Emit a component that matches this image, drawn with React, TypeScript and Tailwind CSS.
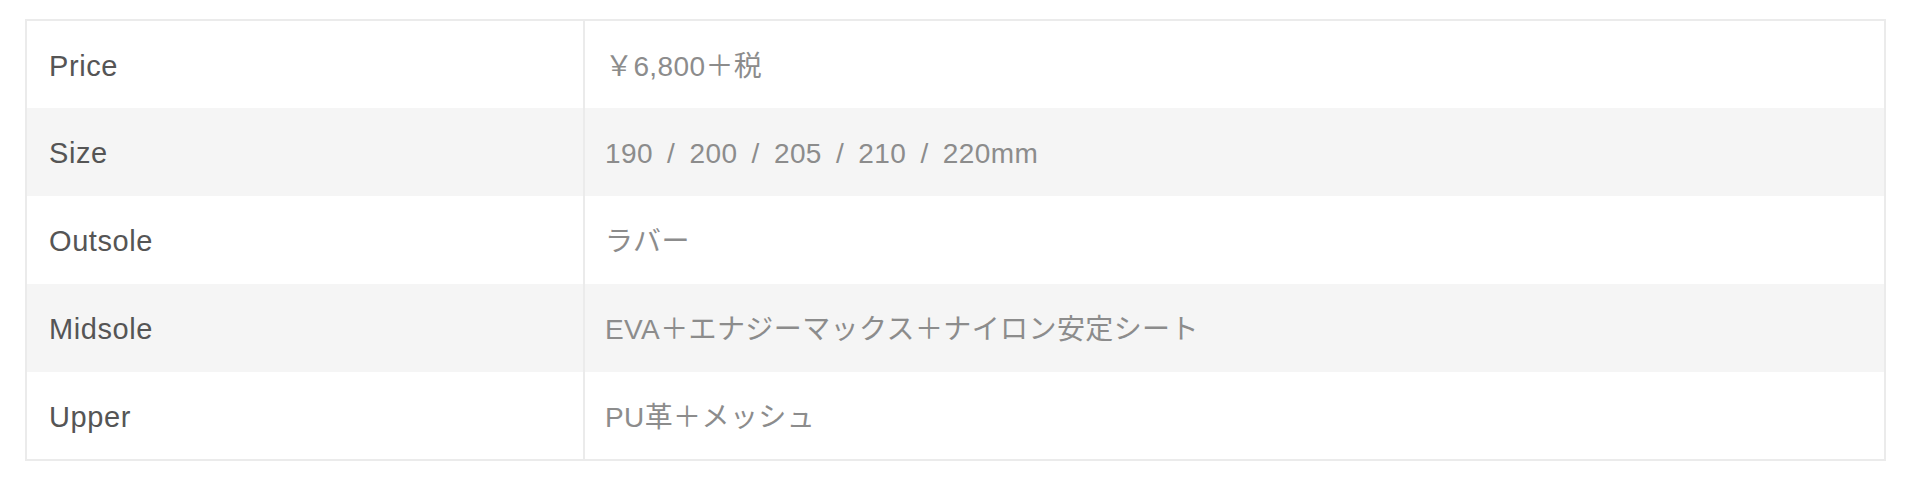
const specs = [
  { label: "Price", value: "￥6,800＋税" },
  { label: "Size", value: "190 / 200 / 205 / 210 / 220mm" },
  { label: "Outsole", value: "ラバー" },
  { label: "Midsole", value: "EVA＋エナジーマックス＋ナイロン安定シート" },
  { label: "Upper", value: "PU革＋メッシュ" },
];

export default function App() {
  return (
    <div className="bg-white min-h-[496px] pl-[25px] pr-[40px] pt-[19px]">
      <table className="w-full border-collapse border-2 border-[#ebebeb]">
        <tbody>
          {specs.map((row, i) => (
            <tr key={row.label} className={i % 2 === 1 ? "bg-[#f5f5f5]" : "bg-white"}>
              <th
                scope="row"
                className="w-[558px] h-[88px] p-0 pt-[4px] pl-[22px] text-left align-middle font-normal text-[29px] tracking-[0.02em] text-[#555555] border-r-2 border-[#ebebeb] font-['Liberation_Sans','Noto_Sans_CJK_JP',sans-serif]"
              >
                {row.label}
              </th>
              <td className="h-[88px] p-0 pt-[4px] pl-[20px] align-middle text-[28px] tracking-[0.4px] [word-spacing:6px] text-[#8c8c8c] font-['Liberation_Sans','Noto_Sans_CJK_JP',sans-serif]">
                {row.value}
              </td>
            </tr>
          ))}
        </tbody>
      </table>
    </div>
  );
}
